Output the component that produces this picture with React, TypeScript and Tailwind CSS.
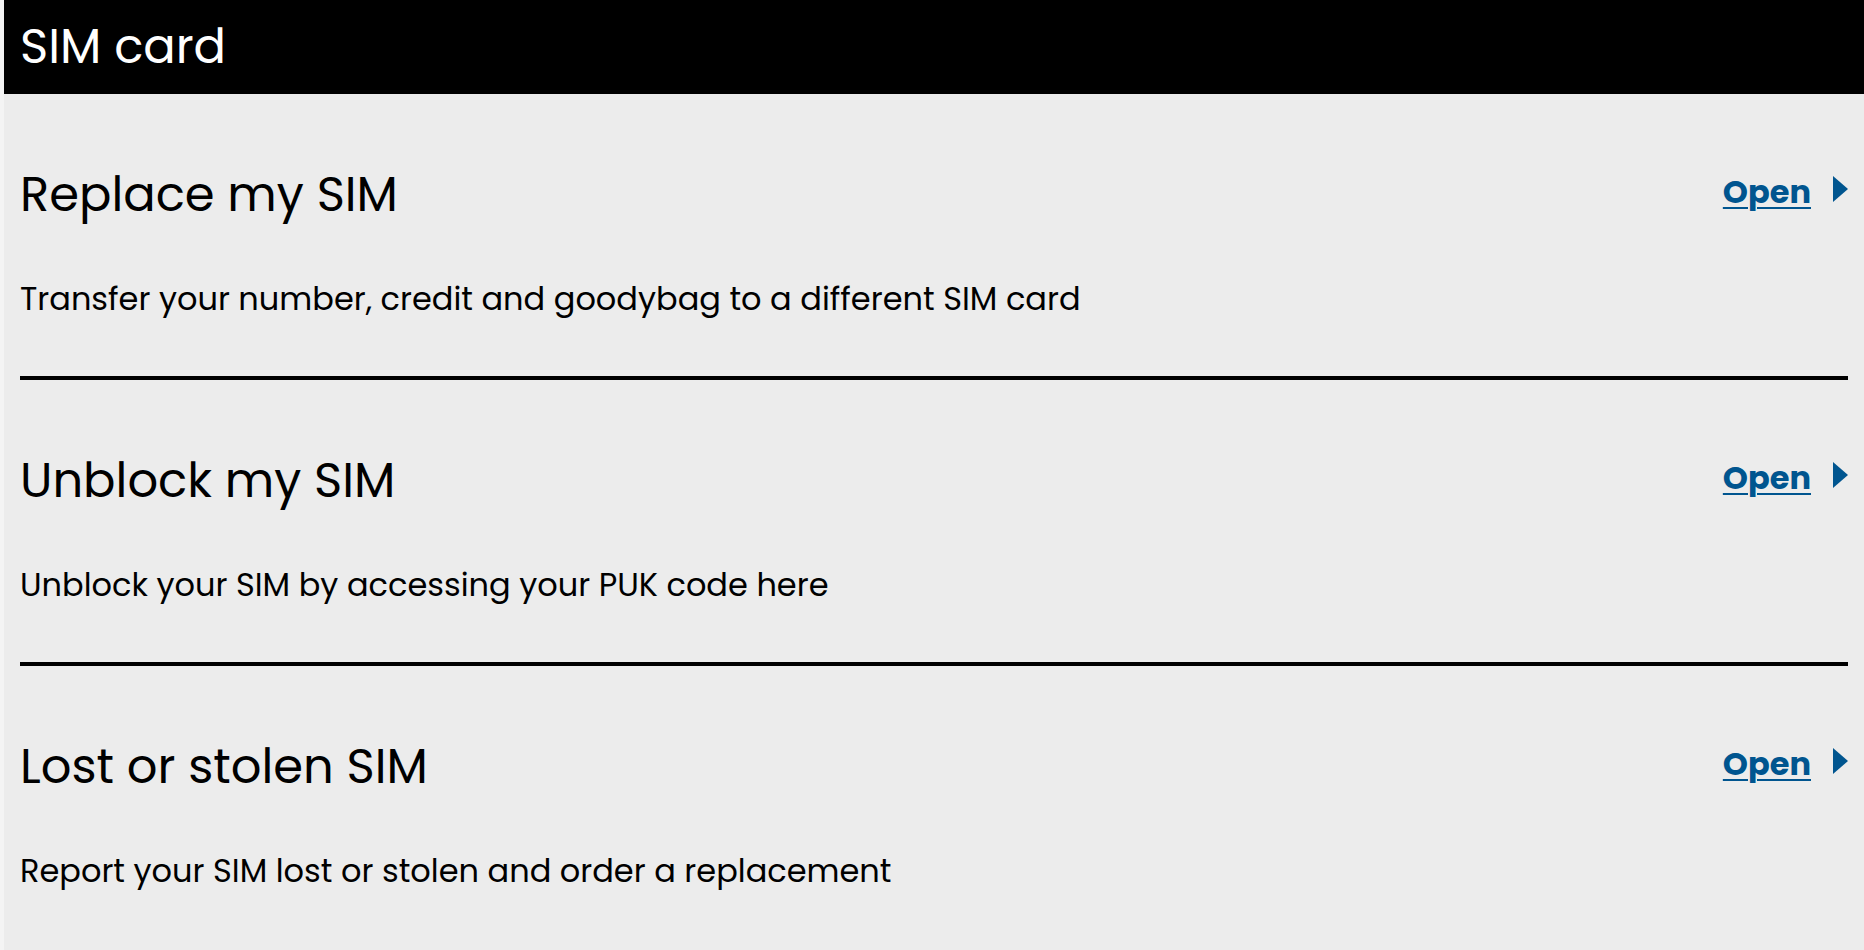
const items = [
  {
    title: "Replace my SIM",
    text: "Transfer your number, credit and goodybag to a different SIM card",
  },
  {
    title: "Unblock my SIM",
    text: "Unblock your SIM by accessing your PUK code here",
  },
  {
    title: "Lost or stolen SIM",
    text: "Report your SIM lost or stolen and order a replacement",
  },
];

function OpenLink() {
  return (
    <a
      href="#"
      className="flex items-center gap-[22px] text-[#00558f] mt-[-7px]"
    >
      <span className="text-[32px] leading-[40px] font-bold underline decoration-2 underline-offset-4">
        Open
      </span>
      <svg width="15" height="26" viewBox="0 0 15 26" className="mb-[6px]">
        <polygon points="0,0 15,13 0,26" fill="currentColor" />
      </svg>
    </a>
  );
}

function Section({ title, text, last }: any) {
  return (
    <div className="mx-4">
      <div
        className={
          last
            ? "pt-[71px] pb-[57px]"
            : "pt-[71px] pb-[57px] border-b-4 border-black"
        }
      >
        <div className="flex items-center justify-between">
          <h2 className="text-[48px] leading-[60px] text-black">{title}</h2>
          <OpenLink />
        </div>
        <p className="mt-[54px] text-[32px] leading-[40px] text-black">
          {text}
        </p>
      </div>
    </div>
  );
}

export default function App() {
  return (
    <div
      className="min-h-screen bg-[#ececec] border-l-4 border-[#f4f4f4]"
      style={{ fontFamily: "'Poppins', 'Open Sans', 'Noto Sans', sans-serif" }}
    >
      <header className="h-[94px] bg-black flex items-center px-4">
        <h1 className="text-[48px] leading-none text-white">SIM card</h1>
      </header>
      {items.map((item, i) => (
        <Section key={item.title} {...item} last={i === items.length - 1} />
      ))}
    </div>
  );
}
